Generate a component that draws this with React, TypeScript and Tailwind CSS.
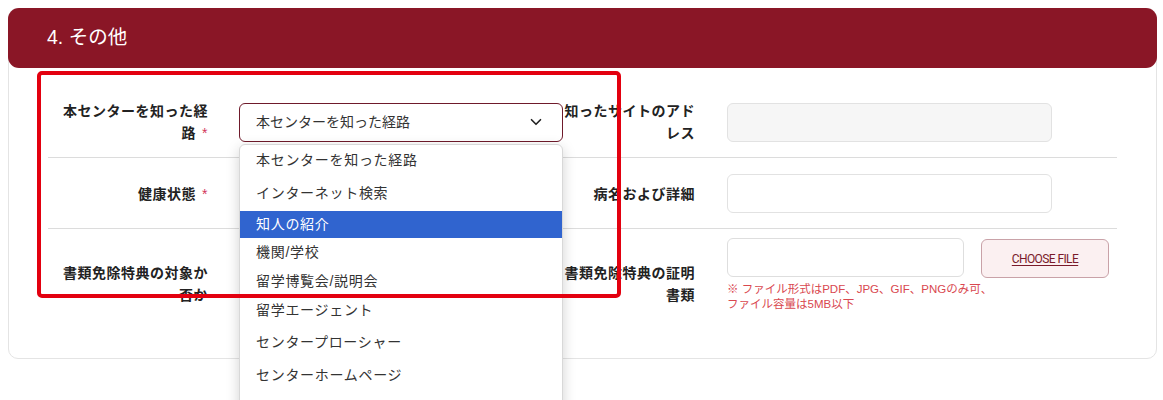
import { ChevronDown } from 'lucide-react';

const options = [
  { label: '本センターを知った経路', h: 'h-[31px]' },
  { label: 'インターネット検索', h: 'h-[35px]' },
  { label: '知人の紹介', h: 'h-[27px]', active: true },
  { label: '機関/学校', h: 'h-[30px]' },
  { label: '留学博覧会/説明会', h: 'h-[27px]' },
  { label: '留学エージェント', h: 'h-[31px]' },
  { label: 'センタープローシャー', h: 'h-[33px]' },
  { label: 'センターホームページ', h: 'h-[34px]' }
];

function Req() {
  return <span className="ml-[6px] font-normal text-[#d2365a]">*</span>;
}

export default function App() {
  return (
    <div className="relative h-[400px] w-full overflow-hidden bg-white px-2 pt-2 font-['Liberation_Sans','Noto_Sans_CJK_JP',sans-serif] text-[#222]">
      <div className="w-[1149px] rounded-[10px] border border-[#e4e4e4] pb-[46px]">
        <div className="-mx-px -mt-px flex h-[60px] items-center rounded-[11px] bg-[#8a1626] pl-[39px] text-[19.5px] text-white">
          4. その他
        </div>

        <div className="mx-[39px] pt-[19px]">
          {/* row 1 */}
          <div className="flex items-center border-b border-[#dcdcdc] py-[13px]">
            <div className="w-[160px] pl-[10px] text-right text-[14px] font-bold leading-[22px] tracking-[0.5px]">
              本センターを知った経路<Req />
            </div>
            <div className="relative ml-[31px] w-[324px]">
              <div className="flex h-[39px] items-center justify-between rounded-[6px] border-[1.5px] border-[#6f1a2b] pl-[16px] pr-[17px] text-[14px] text-[#333]">
                本センターを知った経路
                <ChevronDown size={18} strokeWidth={2.2} className="text-[#222]" />
              </div>
              <div className="absolute left-0 top-[41px] z-10 w-[324px] overflow-hidden rounded-t-[6px] border border-[#d8d8d8] bg-white shadow-[0_4px_14px_rgba(0,0,0,0.18)]">
                {options.map((o) => (
                  <div
                    key={o.label}
                    className={`flex ${o.h} items-center pl-[16px] text-[14px] tracking-[0.7px] ${o.active ? 'bg-[#3064cf] text-white' : 'text-[#333]'}`}
                  >
                    {o.label}
                  </div>
                ))}
                <div className="h-[30px]" />
              </div>
            </div>
            <div className="w-[132px] text-right text-[14px] font-bold leading-[22px] tracking-[0.5px]">
              知ったサイトのアドレス
            </div>
            <div className="ml-[32px] h-[39px] w-[325px] rounded-[6px] border border-[#e2e2e2] bg-[#f6f6f6]" />
          </div>

          {/* row 2 */}
          <div className="flex items-center border-b border-[#dcdcdc] pb-[15px] pt-[16px]">
            <div className="w-[160px] pl-[10px] text-right text-[14px] font-bold leading-[22px] tracking-[0.5px]">
              健康状態<Req />
            </div>
            <div className="ml-[31px] w-[324px]" />
            <div className="w-[132px] text-right text-[14px] font-bold leading-[22px] tracking-[0.5px]">
              病名および詳細
            </div>
            <div className="ml-[32px] h-[39px] w-[325px] rounded-[6px] border border-[#e2e2e2] bg-white" />
          </div>

          {/* row 3 */}
          <div className="flex items-start pt-[9px]">
            <div className="mt-[24px] w-[160px] pl-[10px] text-right text-[14px] font-bold leading-[22px] tracking-[0.5px]">
              書類免除特典の対象か否か
            </div>
            <div className="ml-[31px] w-[324px]" />
            <div className="mt-[24px] w-[132px] text-right text-[14px] font-bold leading-[22px] tracking-[0.5px]">
              書類免除特典の証明書類
            </div>
            <div className="ml-[32px] flex flex-col">
              <div className="flex items-start gap-[17px]">
                <div className="h-[39px] w-[237px] rounded-[6px] border border-[#dedede] bg-white" />
                <button className="mt-px flex h-[39px] w-[128px] items-center justify-center rounded-[6px] border border-[#c9a2a8] bg-[#fbf0f1] font-['Roboto',sans-serif] text-[12px] tracking-[-0.6px] text-[#7a1a2a] underline underline-offset-2">
                  CHOOSE FILE
                </button>
              </div>
              <div className="mt-[4px] text-[11.5px] leading-[15px] text-[#d9484f]">
                ※ ファイル形式はPDF、JPG、GIF、PNGのみ可、
                <br />
                ファイル容量は5MB以下
              </div>
            </div>
          </div>
        </div>
      </div>

      {/* annotation */}
      <div className="pointer-events-none absolute left-[37px] top-[71px] z-20 h-[227px] w-[584px] rounded-[5px] border-4 border-[#e3000f]" />
    </div>
  );
}
